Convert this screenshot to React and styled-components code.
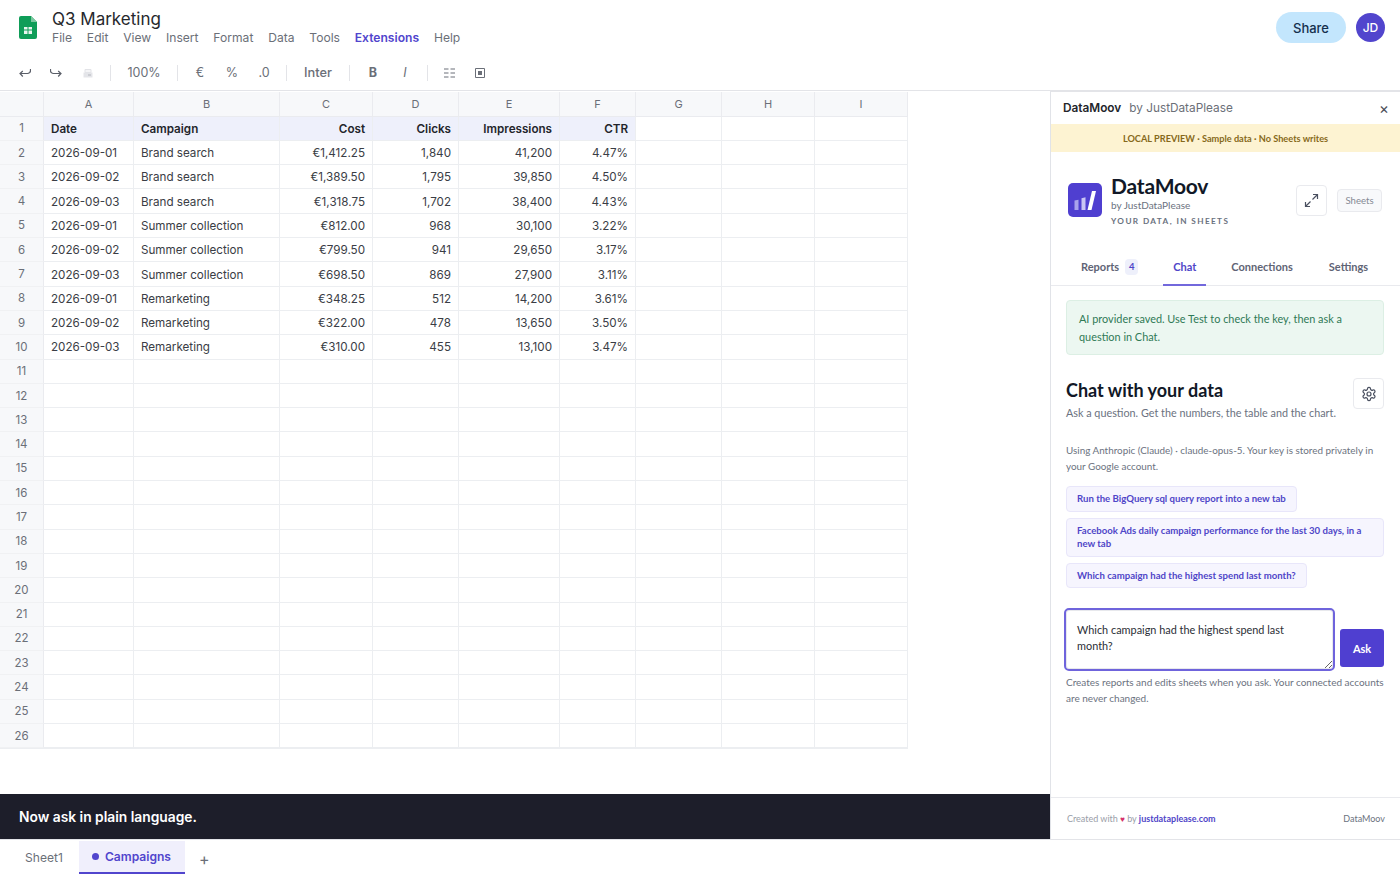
import React from 'react';
import styled, { createGlobalStyle } from 'styled-components';

const panelFont = `Lato, "Noto Sans", sans-serif`;

const Global = createGlobalStyle`
  html, body { margin: 0; padding: 0; background: #fff; }
  * { box-sizing: border-box; }
  body { font-family: Inter, "Liberation Sans", sans-serif; overflow: hidden; }
`;

const Page = styled.div`
  width: 1400px; height: 876px; display: flex; flex-direction: column; overflow: hidden; background: #fff;
`;
const Top = styled.header`
  height: 56px; display: flex; align-items: flex-start; padding: 9px 15px 0 19px; flex: none;
`;
const Logo = styled.svg`
  width: 18px; height: 23px; margin-top: 7px; margin-right: 15px; flex: none;
`;
const TitleBlock = styled.div`
  display: flex; flex-direction: column; flex: 1;
`;
const DocTitle = styled.div`
  font-size: 17px; line-height: 20px; color: #26282d; font-weight: 400;
`;
const Menu = styled.nav`
  display: flex; gap: 14.8px; margin-top: 1px; font-size: 12.1px; line-height: 16px; color: #6b6f78;
`;
const MenuItem = styled.span`
  color: ${p => (p.$active ? '#5145cd' : '#6b6f78')};
  font-weight: ${p => (p.$active ? 600 : 400)};
`;
const ShareWrap = styled.div`
  display: flex; align-items: center; gap: 10px; margin-top: 3px;
`;
const Share = styled.button`
  width: 70px; height: 31px; border: 0; border-radius: 16px; background: #c3e6fd; color: #14304d;
  font: 500 13px Inter, sans-serif;
`;
const Avatar = styled.div`
  width: 29px; height: 29px; border-radius: 50%; background: #5145cd; color: #fff;
  display: flex; align-items: center; justify-content: center; font-size: 12px; font-weight: 500;
`;
const Toolbar = styled.div`
  height: 35px; flex: none; display: flex; align-items: center; padding-left: 18px; color: #6b6f78;
  border-bottom: 1px solid #e3e4e8; font-size: 12.5px;
`;
const Tool = styled.span`
  width: ${p => p.$w}px; flex: none; text-align: center; line-height: 18px; display: inline-flex;
  justify-content: center; align-items: center;
  margin-left: ${p => p.$ml || 0}px;
  font-weight: ${p => p.$weight || 400};
  font-style: ${p => (p.$italic ? 'italic' : 'normal')};
  font-size: ${p => p.$size || 12.5}px;
`;
const Sep = styled.span`
  width: 1px; height: 16px; background: #e3e4e8; flex: none;
  margin-left: ${p => p.$l ?? 0}px;
`;
const Main = styled.div`
  flex: 1; display: flex; min-height: 0;
`;
const Left = styled.div`
  flex: 1; min-width: 0; display: flex; flex-direction: column; margin-top: 1px;
`;
const SheetArea = styled.div`
  flex: 1; min-height: 0; overflow: hidden;
`;
const Grid = styled.div`
  display: grid;
  grid-template-columns: 44px 90px 146px 93px 86px 101px 76px 86px 93px 93px;
  grid-template-rows: 24.6px repeat(26, 24.3px);
  width: 908px;
  border-bottom: 1px solid #eceef1;
`;
const ColHead = styled.div`
  background: #f7f8fa; border-right: 1px solid #eaebef; border-bottom: 1px solid #eaebef;
  font-size: 11px; color: #6b6f78; display: flex; align-items: center; justify-content: center;
`;
const RowHead = styled.div`
  background: #f7f8fa; border-right: 1px solid #eaebef; border-bottom: 1px solid #f0f1f3;
  font-size: 11.5px; color: #6b6f78; display: flex; align-items: center; justify-content: center;
`;
const Cell = styled.div`
  border-right: 1px solid #eceef1; border-bottom: 1px solid #eceef1;
  background: ${p => (p.$head ? '#eef0fb' : '#fff')};
  font-size: 11.65px; color: ${p => (p.$head ? '#23252b' : '#3a3d45')};
  font-weight: ${p => (p.$head ? 600 : 400)};
  display: flex; align-items: center; padding: 1px 7px 0;
  justify-content: ${p => (p.$right ? 'flex-end' : 'flex-start')};
  white-space: nowrap; overflow: hidden;
`;
const Banner = styled.div`
  height: 45px; flex: none; background: #1d1e2a; color: #fff; display: flex; align-items: center;
  padding-left: 19px; font-size: 13.8px; font-weight: 600;
`;
const Panel = styled.aside`
  width: 350px; flex: none; display: flex; flex-direction: column;
  border-left: 1px solid #e1e3e8; border-top: 1px solid #e3e4e8;
  font-family: ${panelFont}; background: #fff;
`;
const PanelHead = styled.div`
  height: 32px; flex: none; display: flex; align-items: center; padding: 0 11px 0 12px; font-size: 11.8px;
  font-family: Inter, sans-serif;
`;
const PanelName = styled.span`
  font-weight: 600; color: #23252b; margin-right: 8px;
`;
const PanelBy = styled.span`
  color: #6b6f78; flex: 1;
`;
const Close = styled.span`
  font-size: 15px; color: #4a4d55; line-height: 1;
`;
const Preview = styled.div`
  height: 28px; flex: none; background: #fdf3d2; color: #86691a; font-size: 9.2px; font-weight: 700;
  display: flex; align-items: center; justify-content: center;
`;
const Brand = styled.div`
  display: flex; align-items: flex-start; padding: 21px 18px 0 17px; height: 97px; flex: none;
`;
const BrandMark = styled.svg`
  width: 34px; height: 34px; margin-top: 10px; margin-right: 9px; flex: none;
`;
const BrandText = styled.div`
  flex: 1; display: flex; flex-direction: column;
`;
const BrandTitle = styled.div`
  font-size: 21px; font-weight: 700; line-height: 26px; color: #111827; letter-spacing: -0.2px;
`;
const BrandBy = styled.div`
  font-size: 10px; line-height: 13px; color: #6b7280; margin-top: 0;
`;
const BrandTag = styled.div`
  font-size: 8.2px; line-height: 12px; letter-spacing: 1.4px; color: #6b7280; font-weight: 700; margin-top: 3px;
`;
const IconBtn = styled.button`
  width: 31px; height: 31px; border: 1px solid #e9eaee; border-radius: 4px; background: #fff; padding: 0;
  display: flex; align-items: center; justify-content: center; flex: none;
`;
const ExpandBtn = styled(IconBtn)`
  margin: 12px 10px 0 0;
`;
const Chip = styled.span`
  width: 45px; height: 23px; border: 1px solid #e9eaee; border-radius: 4px; background: #f8f9fb; color: #858a94;
  font-size: 9.6px; display: flex; align-items: center; justify-content: center; margin-top: 16px; flex: none;
`;
const Tabs = styled.nav`
  height: 37px; flex: none; display: flex; border-bottom: 1px solid #e9eaee; padding-left: 30px;
  font-size: 11px; font-weight: 700;
`;
const Tab = styled.div`
  height: 37px; display: flex; align-items: center; gap: 6px; margin-right: ${p => p.$mr}px;
  padding: 0 ${p => p.$pad || 0}px;
  color: ${p => (p.$active ? '#4f46c8' : '#5f6475')};
  border-bottom: 2px solid ${p => (p.$active ? '#7268dc' : 'transparent')};
`;
const Count = styled.span`
  width: 13px; height: 16px; border-radius: 4px; background: #eef0fb; color: #4f46c8; font-size: 9.5px;
  display: flex; align-items: center; justify-content: center;
`;
const Body = styled.div`
  flex: 1; min-height: 0; padding: 14px 16px 0 15px; display: flex; flex-direction: column;
`;
const Alert = styled.div`
  height: 55px; flex: none; background: #ecf7f1; border: 1px solid #dcefe4; border-radius: 4px; color: #2f7a56;
  font-size: 10.9px; line-height: 18px; padding: 9px 12px;
`;
const ChatHead = styled.div`
  display: flex; justify-content: space-between; margin-top: 23px; flex: none;
`;
const ChatIntro = styled.div`
  display: flex; flex-direction: column;
`;
const ChatTitle = styled.h2`
  margin: 0; font-size: 18px; line-height: 24px; font-weight: 700; color: #111827;
`;
const Sub = styled.p`
  margin: 0; font-size: 10.8px; line-height: 16px; color: #6b7280; margin-top: 3px;
`;
const Using = styled.p`
  margin: 21px 0 0; font-size: 9.9px; line-height: 16px; color: #6b7280;
`;
const Suggest = styled.div`
  display: flex; flex-direction: column; align-items: flex-start; gap: 6px; margin-top: 12px;
`;
const Suggestion = styled.button`
  border: 1px solid #e8e6fa; border-radius: 4px; background: #f6f5fe; color: #4f46c8; text-align: left;
  font: 700 9.6px/13.5px ${panelFont}; padding: 5px 10px; min-height: 25px;
`;
const AskRow = styled.div`
  display: flex; align-items: flex-end; gap: 5px; margin-top: 20px; margin-left: -2px;
`;
const Input = styled.textarea`
  width: 272px; height: 63px; border: 2px solid #6f64dc; border-radius: 5px; background: #fff;
  box-shadow: inset 0 0 0 1px #e7e8ec; outline: none;
  font: 400 10.9px/16px ${panelFont}; color: #2b2e36; padding: 12px 11px; resize: vertical;
`;
const Ask = styled.button`
  width: 44px; height: 38px; border: 0; border-radius: 3px; background: #4f3fd0; color: #fff;
  font: 700 11px ${panelFont}; margin-bottom: 4px;
`;
const Note = styled.p`
  margin: 4px 0 0; font-size: 10px; line-height: 15.5px; color: #6b7280;
`;
const Foot = styled.footer`
  height: 42px; flex: none; border-top: 1px solid #e9eaee; display: flex; align-items: center;
  justify-content: space-between; padding: 0 15px 0 16px; font-size: 9px; color: #9a9ea8;
`;
const FootBrand = styled.span`
  color: #6b7280;
`;
const Heart = styled.span`
  color: #d6336c; font-size: 8px;
`;
const FootLink = styled.span`
  color: #4f46c8; font-weight: 700;
`;
const SheetTabs = styled.div`
  height: 37px; flex: none; display: flex; align-items: flex-start; padding-left: 12px; font-size: 12.1px;
  border-top: 1px solid #e3e4e8;
`;
const SheetTab = styled.div`
  height: 33px; margin-top: 1px; display: flex; align-items: center; gap: 6px;
  padding: 0 ${p => (p.$active ? '14px 0 13px' : '16px 0 13px')};
  color: ${p => (p.$active ? '#5145cd' : '#6b6f78')};
  font-weight: ${p => (p.$active ? 600 : 400)};
  background: ${p => (p.$active ? '#f0effc' : 'transparent')};
  border-bottom: ${p => (p.$active ? '2.5px solid #5145cd' : '0')};
`;
const Dot = styled.span`
  width: 7px; height: 7px; border-radius: 50%; background: #5145cd;
`;
const AddTab = styled.span`
  font-size: 16px; color: #6b6f78; margin: 11px 0 0 14px; line-height: 16px;
`;

const menu = ['File', 'Edit', 'View', 'Insert', 'Format', 'Data', 'Tools', 'Extensions', 'Help'];
const cols = ['A', 'B', 'C', 'D', 'E', 'F', 'G', 'H', 'I'];
const rows = [
  ['2026-09-01', 'Brand search', '€1,412.25', '1,840', '41,200', '4.47%'],
  ['2026-09-02', 'Brand search', '€1,389.50', '1,795', '39,850', '4.50%'],
  ['2026-09-03', 'Brand search', '€1,318.75', '1,702', '38,400', '4.43%'],
  ['2026-09-01', 'Summer collection', '€812.00', '968', '30,100', '3.22%'],
  ['2026-09-02', 'Summer collection', '€799.50', '941', '29,650', '3.17%'],
  ['2026-09-03', 'Summer collection', '€698.50', '869', '27,900', '3.11%'],
  ['2026-09-01', 'Remarketing', '€348.25', '512', '14,200', '3.61%'],
  ['2026-09-02', 'Remarketing', '€322.00', '478', '13,650', '3.50%'],
  ['2026-09-03', 'Remarketing', '€310.00', '455', '13,100', '3.47%'],
];
const head = ['Date', 'Campaign', 'Cost', 'Clicks', 'Impressions', 'CTR'];

function Sheet() {
  const all = [head, ...rows];
  return (
    <Grid>
      <ColHead />
      {cols.map(c => <ColHead key={c}>{c}</ColHead>)}
      {Array.from({ length: 26 }, (_, r) => (
        <React.Fragment key={r}>
          <RowHead>{r + 1}</RowHead>
          {cols.map((c, i) => {
            const v = all[r] ? all[r][i] : undefined;
            return <Cell key={c} $head={r === 0 && i < 6} $right={i >= 2 && i < 6}>{v}</Cell>;
          })}
        </React.Fragment>
      ))}
    </Grid>
  );
}

export default function App() {
  return (
    <Page>
      <Global />
      <Top>
        <Logo viewBox="0 0 18 23">
          <path d="M2 0h10l6 6v15a2 2 0 0 1-2 2H2a2 2 0 0 1-2-2V2a2 2 0 0 1 2-2z" fill="#0f9d58" />
          <path d="M12 0l6 6h-6z" fill="#7cc8a0" />
          <path d="M5 11h8v7H5z" fill="#e8f5ee" />
          <path d="M5 14h8M9 11v7" stroke="#0f9d58" strokeWidth="1" />
        </Logo>
        <TitleBlock>
          <DocTitle>Q3 Marketing</DocTitle>
          <Menu>{menu.map(m => <MenuItem key={m} $active={m === 'Extensions'}>{m}</MenuItem>)}</Menu>
        </TitleBlock>
        <ShareWrap>
          <Share>Share</Share>
          <Avatar>JD</Avatar>
        </ShareWrap>
      </Top>
      <Toolbar>
        <Tool $w={14}>
          <svg width="12" height="10" viewBox="0 0 12 10" fill="none" stroke="#5a5e68" strokeWidth="1.2"><path d="M11.5 1v1.5A3 3 0 0 1 8.5 5.5H1M3.8 3 1 5.5 3.8 8.5" /></svg>
        </Tool>
        <Tool $w={14} $ml={17}>
          <svg width="12" height="10" viewBox="0 0 12 10" fill="none" stroke="#5a5e68" strokeWidth="1.2"><path d="M.5 1v1.5a3 3 0 0 0 3 3H11M8.2 3 11 5.5 8.2 8.5" /></svg>
        </Tool>
        <Tool $w={14} $ml={18}>
          <svg width="10" height="9" viewBox="0 0 10 9" fill="none"><path d="M2 .5h6v3H2z" fill="#f5f5f7" stroke="#e2e3e7" /><path d="M.5 3.5h9v5h-9z" fill="#e4e5e9" /><path d="M5 6h3" stroke="#b4b6bd" /></svg>
        </Tool>
        <Sep $l={15} />
        <Tool $w={66}>100%</Tool>
        <Sep />
        <Tool $w={44}>€</Tool>
        <Tool $w={20}>%</Tool>
        <Tool $w={44}>.0</Tool>
        <Sep />
        <Tool $w={62} $weight={500} $size={12.8}>Inter</Tool>
        <Sep />
        <Tool $w={46} $weight={700}>B</Tool>
        <Tool $w={18} $italic>I</Tool>
        <Sep $l={13} />
        <Tool $w={43}>
          <svg width="11" height="10" viewBox="0 0 11 10" stroke="#6b6f78" strokeWidth="1"><path d="M0 1h4.5M6.5 1H11M0 5h4.5M6.5 5H11M0 9h4.5M6.5 9H11" /></svg>
        </Tool>
        <Tool $w={18}>
          <svg width="10" height="10" viewBox="0 0 10 10"><path d="M.5.5h9v9h-9z" fill="none" stroke="#6b6f78" /><path d="M3 3h4v4H3z" fill="#6b6f78" /></svg>
        </Tool>
      </Toolbar>
      <Main>
        <Left>
          <SheetArea><Sheet /></SheetArea>
          <Banner>Now ask in plain language.</Banner>
        </Left>
        <Panel>
          <PanelHead>
            <PanelName>DataMoov</PanelName>
            <PanelBy>by JustDataPlease</PanelBy>
            <Close>×</Close>
          </PanelHead>
          <Preview>LOCAL PREVIEW · Sample data · No Sheets writes</Preview>
          <Brand>
            <BrandMark viewBox="0 0 34 34">
              <rect width="34" height="34" rx="5" fill="#4f3fd0" />
              <path d="M6.5 17.5l4-.8v10.3h-4z" fill="#a9a3ec" />
              <path d="M13.5 15.2l4-1V27h-4z" fill="#c9c5f4" />
              <path d="M24 8h4l-4.5 19h-4z" fill="#fff" />
            </BrandMark>
            <BrandText>
              <BrandTitle>DataMoov</BrandTitle>
              <BrandBy>by JustDataPlease</BrandBy>
              <BrandTag>YOUR DATA, IN SHEETS</BrandTag>
            </BrandText>
            <ExpandBtn aria-label="Expand">
              <svg width="15" height="15" viewBox="0 0 15 15" fill="none" stroke="#4a5060" strokeWidth="1.2"><path d="M9 1.5h4.5V6M13.5 1.5 8.5 6.5M6 13.5H1.5V9M1.5 13.5l5-5" /></svg>
            </ExpandBtn>
            <Chip>Sheets</Chip>
          </Brand>
          <Tabs>
            <Tab $mr={25}>Reports <Count>4</Count></Tab>
            <Tab $active $mr={25} $pad={10}>Chat</Tab>
            <Tab $mr={36}>Connections</Tab>
            <Tab $mr={0}>Settings</Tab>
          </Tabs>
          <Body>
            <Alert>AI provider saved. Use Test to check the key, then ask a question in Chat.</Alert>
            <ChatHead>
              <ChatIntro>
                <ChatTitle>Chat with your data</ChatTitle>
                <Sub>Ask a question. Get the numbers, the table and the chart.</Sub>
              </ChatIntro>
              <IconBtn aria-label="Settings">
                <svg width="16" height="16" viewBox="0 0 24 24" fill="none" stroke="#4a5060" strokeWidth="1.8" strokeLinecap="round" strokeLinejoin="round">
                  <path d="M12.22 2h-.44a2 2 0 0 0-2 2v.18a2 2 0 0 1-1 1.73l-.43.25a2 2 0 0 1-2 0l-.15-.08a2 2 0 0 0-2.73.73l-.22.38a2 2 0 0 0 .73 2.73l.15.1a2 2 0 0 1 1 1.72v.51a2 2 0 0 1-1 1.74l-.15.09a2 2 0 0 0-.73 2.73l.22.38a2 2 0 0 0 2.73.73l.15-.08a2 2 0 0 1 2 0l.43.25a2 2 0 0 1 1 1.73V20a2 2 0 0 0 2 2h.44a2 2 0 0 0 2-2v-.18a2 2 0 0 1 1-1.73l.43-.25a2 2 0 0 1 2 0l.15.08a2 2 0 0 0 2.73-.73l.22-.39a2 2 0 0 0-.73-2.73l-.15-.08a2 2 0 0 1-1-1.74v-.5a2 2 0 0 1 1-1.74l.15-.09a2 2 0 0 0 .73-2.73l-.22-.38a2 2 0 0 0-2.73-.73l-.15.08a2 2 0 0 1-2 0l-.43-.25a2 2 0 0 1-1-1.73V4a2 2 0 0 0-2-2z" />
                  <circle cx="12" cy="12" r="3" />
                </svg>
              </IconBtn>
            </ChatHead>
            <Using>Using Anthropic (Claude) · claude-opus-5. Your key is stored privately in your Google account.</Using>
            <Suggest>
              <Suggestion>Run the BigQuery sql query report into a new tab</Suggestion>
              <Suggestion>Facebook Ads daily campaign performance for the last 30 days, in a new tab</Suggestion>
              <Suggestion>Which campaign had the highest spend last month?</Suggestion>
            </Suggest>
            <AskRow>
              <Input readOnly value="Which campaign had the highest spend last month?" />
              <Ask>Ask</Ask>
            </AskRow>
            <Note>Creates reports and edits sheets when you ask. Your connected accounts are never changed.</Note>
          </Body>
          <Foot>
            <span>Created with <Heart>♥</Heart> by <FootLink>justdataplease.com</FootLink></span>
            <FootBrand>DataMoov</FootBrand>
          </Foot>
        </Panel>
      </Main>
      <SheetTabs>
        <SheetTab>Sheet1</SheetTab>
        <SheetTab $active><Dot />Campaigns</SheetTab>
        <AddTab>+</AddTab>
      </SheetTabs>
    </Page>
  );
}
